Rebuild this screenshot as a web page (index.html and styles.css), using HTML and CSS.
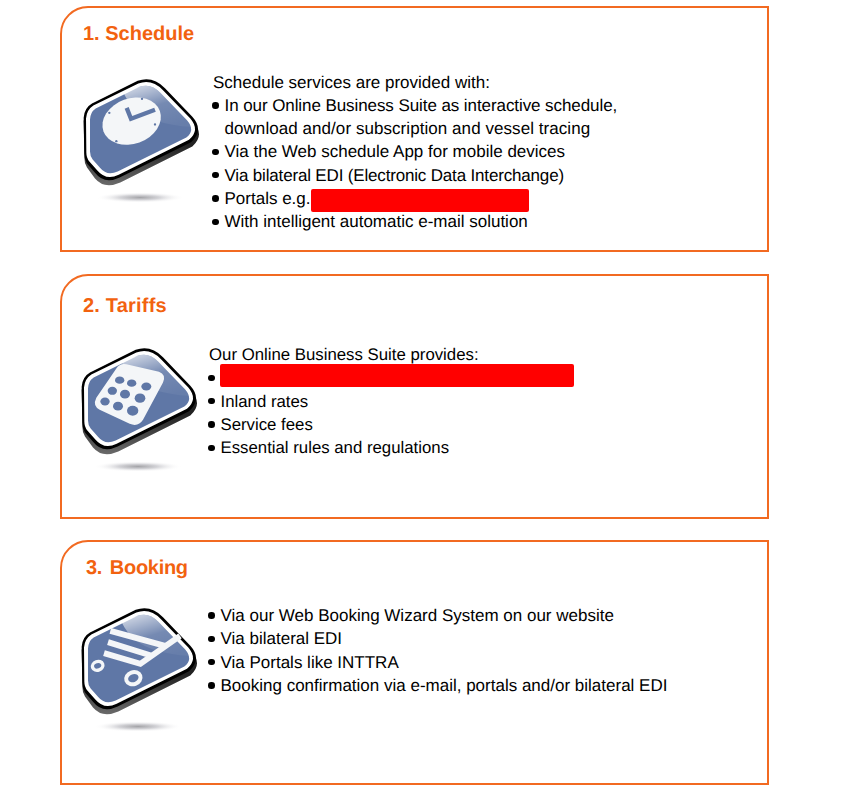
FILE: index.html
```html
<!DOCTYPE html>
<html>
<head>
  <title>Services</title>
  <link rel="stylesheet" href="styles.css">
</head>
<body>
  <!-- shared badge behind the three icons -->
  <svg class="defs" width="0" height="0">
    <defs>
      <linearGradient id="shine" x1="0.2" y1="0" x2="0.7" y2="1">
        <stop offset="0" stop-color="#fff" stop-opacity="0.7"/>
        <stop offset="0.5" stop-color="#fff" stop-opacity="0.14"/>
        <stop offset="1" stop-color="#fff" stop-opacity="0.05"/>
      </linearGradient>
      <radialGradient id="floor">
        <stop offset="0" stop-color="#a4a4a8"/>
        <stop offset="0.45" stop-color="#d4d4d8"/>
        <stop offset="1" stop-color="#fff" stop-opacity="0"/>
      </radialGradient>
      <linearGradient id="drop" x1="0" y1="0" x2="0" y2="1">
        <stop offset="0.6" stop-color="#222"/>
        <stop offset="1" stop-color="#6a6a6a"/>
      </linearGradient>
      <symbol id="badge" viewBox="80 230 360 380">
        <ellipse cx="257" cy="594" rx="132" ry="16" fill="url(#floor)"/>
        <path fill="url(#drop)" d="M113 322 L250 260 Q295 244 332 280 L418 370 Q452 407 414 441 L198 549 Q150 570 122 537 L98 504 Q90 492 90 474 L88 365 Q90 335 113 322 Z"/>
        <path fill="#000" d="M113 312 L250 244 Q295 228 332 266 L414 352 Q450 392 410 428 L196 534 Q150 556 122 520 L98 492 Q90 480 90 462 L88 355 Q90 325 113 312 Z"/>
        <path fill="#fff" d="M117 318 L252 252 Q292 237 326 272 L408 357 Q438 392 404 421 L193 526 Q155 544 129 513 L105 486 Q96 475 96 459 L95 357 Q97 331 117 318 Z"/>
        <path fill="#5f77a6" d="M124 327 L256 262 Q290 250 318 280 L398 362 Q424 392 396 414 L190 516 Q158 531 137 505 L115 480 Q107 470 107 456 L107 360 Q108 338 124 327 Z"/>
        <path fill="url(#shine)" d="M207 279 L256 262 Q290 250 318 280 L398 362 Q408 372 411 382 Q300 375 250 335 Q222 312 207 279 Z"/>
      </symbol>
    </defs>
  </svg>

  <div class="card card-schedule">
    <h2 class="title">1. Schedule</h2>
    <div class="row">
      <svg class="icon" viewBox="80 230 360 380">
        <use href="#badge" x="80" y="230" width="360" height="380"/>
        <ellipse cx="232" cy="365" rx="90" ry="68" transform="rotate(-20 232 365)" fill="#f4f6f8"/>
        <path d="M217 325 L230 358 L302 331" fill="none" stroke="#5f77a6" stroke-width="13"/>
        <circle cx="165" cy="340" r="3.5" fill="#5f77a6"/>
        <circle cx="263" cy="298" r="3.5" fill="#5f77a6"/>
        <circle cx="302" cy="375" r="3.5" fill="#5f77a6"/>
        <circle cx="186" cy="425" r="3.5" fill="#5f77a6"/>
      </svg>
      <div class="text">
        <p class="line">Schedule services are provided with:</p>
        <ul class="list">
          <li><span class="snug">In our Online Business Suite as interactive schedule,</span><br><span class="loose">download and/or subscription and vessel tracing</span></li>
          <li>Via the Web schedule App for mobile devices</li>
          <li><span class="tight">Via bilateral EDI (Electronic Data Interchange)</span></li>
          <li>Portals e.g.<span class="redact redact-short"></span></li>
          <li>With intelligent automatic e-mail solution</li>
        </ul>
      </div>
    </div>
  </div>

  <div class="card card-tariffs">
    <h2 class="title">2. Tariffs</h2>
    <div class="row">
      <svg class="icon" viewBox="80 230 360 380">
        <use href="#badge" x="80" y="230" width="360" height="380"/>
        <path d="M222 287 L320 310 Q342 318 332 342 L272 454 Q258 476 232 466 L142 424 Q120 412 132 388 L192 300 Q202 283 222 287 Z" fill="#f4f6f8"/>
        <g fill="#5f77a6">
          <ellipse cx="202" cy="335" rx="14" ry="11"/>
          <ellipse cx="238" cy="344" rx="14" ry="11"/>
          <ellipse cx="282" cy="354" rx="15" ry="12"/>
          <ellipse cx="180" cy="367" rx="14" ry="12"/>
          <ellipse cx="218" cy="377" rx="15" ry="13"/>
          <ellipse cx="263" cy="389" rx="16" ry="14"/>
          <ellipse cx="158" cy="399" rx="14" ry="12"/>
          <ellipse cx="197" cy="413" rx="15" ry="13"/>
          <ellipse cx="241" cy="427" rx="17" ry="15"/>
        </g>
      </svg>
      <div class="text">
        <p class="line">Our Online Business Suite provides:</p>
        <ul class="list">
          <li><span class="redact redact-long"></span></li>
          <li>Inland rates</li>
          <li>Service fees</li>
          <li>Essential rules and regulations</li>
        </ul>
      </div>
    </div>
  </div>

  <div class="card card-booking">
    <h2 class="title">3. Booking</h2>
    <div class="row">
      <svg class="icon" viewBox="80 230 360 380">
        <use href="#badge" x="80" y="230" width="360" height="380"/>
        <g fill="none" stroke="#f4f6f8">
          <path d="M174 307 L338 352 M167 341 L296 381 M155 374 L264 406 L383 322" stroke-width="18"/>
          <ellipse cx="136" cy="412" rx="16" ry="13" transform="rotate(-20 136 412)" stroke-width="10"/>
          <ellipse cx="243" cy="449" rx="22" ry="18" transform="rotate(-20 243 449)" stroke-width="12"/>
        </g>
      </svg>
      <div class="text">
        <ul class="list">
          <li>Via our Web Booking Wizard System on our website</li>
          <li>Via bilateral EDI</li>
          <li>Via Portals like INTTRA</li>
          <li>Booking confirmation via e-mail, portals and/or bilateral EDI</li>
        </ul>
      </div>
    </div>
  </div>
</body>
</html>
```

FILE: styles.css
```css
body {
  margin: 0;
  padding: 6px 0 0 60px;
  background-color: #fff;
  color: #000;
  font-family: "Liberation Sans", Arial, sans-serif;
  font-size: 17px;
  line-height: 23.3px;
  text-rendering: geometricPrecision;
}

.defs {
  display: block;
  height: 0;
}

.card {
  box-sizing: border-box;
  width: 709px;
  height: 245px;
  margin-bottom: 22px;
  border: 2px solid #f26a21;
  border-top-left-radius: 28px;
}

.card-schedule {
  height: 246px;
}

.card-tariffs {
  font-size: 16.8px;
}

.card-booking {
  margin-top: -1px;
}

.title {
  margin: 0;
  padding: 15px 0 0 21px;
  color: #f2620f;
  font-size: 20px;
  line-height: 23px;
  font-weight: bold;
}

.card-tariffs .title {
  padding-top: 19px;
  letter-spacing: 0.2px;
}

.card-booking .title {
  padding-left: 24px;
  letter-spacing: -0.3px;
  word-spacing: 2.5px;
}

.row {
  display: flex;
  align-items: flex-start;
  padding-left: 19px;
}

.card-schedule .row {
  margin-top: 24.5px;
}

.card-tariffs .row {
  margin-top: 25px;
  padding-left: 17px;
}

.card-booking .row {
  margin-top: 24px;
  padding-left: 17px;
}

.icon {
  flex: none;
  width: 120px;
  height: 127px;
  margin-right: 12px;
}

.card-schedule .icon {
  margin-top: 5px;
}

.card-tariffs .icon {
  margin-top: 2px;
  margin-right: 10px;
}

.card-booking .icon {
  margin-top: 1px;
  margin-right: 10px;
}

.line {
  margin: 0;
}

.list {
  margin: 0;
  padding: 0;
  list-style: none;
}

.list li {
  padding-left: 11.5px;
}

.list li::before {
  content: "";
  display: inline-block;
  width: 6.5px;
  height: 6.5px;
  margin: 0 6px 2px -12.5px;
  border-radius: 50%;
  background-color: #000;
  vertical-align: middle;
}

.snug {
  letter-spacing: -0.08px;
}

.loose {
  letter-spacing: 0.06px;
}

.tight {
  letter-spacing: -0.17px;
}

.redact {
  display: inline-block;
  height: 23px;
  background-color: #f00;
  border-radius: 2px;
  vertical-align: top;
}

.redact-short {
  width: 218px;
  margin: 2px 0 -2px 0;
}

.redact-long {
  width: 354px;
  margin: -2px 0 2px -1px;
}
```
